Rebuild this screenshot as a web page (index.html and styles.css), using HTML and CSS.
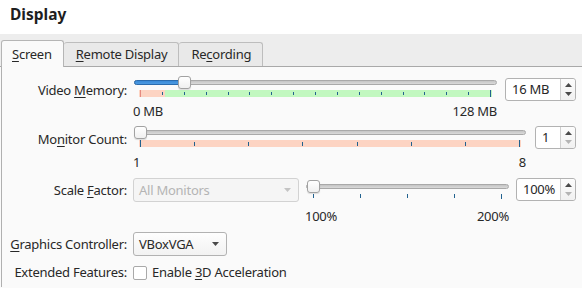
FILE: index.html
```html
<!DOCTYPE html>
<html lang="en">
<head>
    <meta charset="UTF-8">
    <title>Display</title>
    <link rel="stylesheet" href="styles.css">
</head>
<body>
    <div class="header"><h1>Display</h1></div>

    <div class="tabbar">
        <div class="tab active"><u>S</u>creen</div>
        <div class="tab"><u>R</u>emote Display</div>
        <div class="tab">Re<u>c</u>ording</div>
    </div>

    <div class="panel">
        <!-- video memory -->
        <div class="row row-mem">
            <label class="label">Video <u>M</u>emory:</label>
            <div class="slider">
                <div class="track">
                    <div class="fill" style="width: 50px"></div>
                    <div class="handle" style="left: 44px"></div>
                </div>
                <div class="ticks bar mem">
                    <i class="full red"></i><i></i><i></i><i></i><i></i><i></i><i></i><i></i><i></i>
                    <i></i><i></i><i></i><i></i><i></i><i></i><i></i><i class="full"></i>
                </div>
                <div class="ends"><span>0 MB</span><span>128 MB</span></div>
            </div>
            <div class="spin spin-mem">
                <div class="val">16 MB</div>
                <div class="btns">
                    <svg width="7" height="4" viewBox="0 0 7 4"><polygon points="0,4 3.5,0 7,4" fill="#4a4a4a"/></svg>
                    <svg width="7" height="4" viewBox="0 0 7 4"><polygon points="0,0 7,0 3.5,4" fill="#4a4a4a"/></svg>
                </div>
            </div>
        </div>

        <!-- monitor count -->
        <div class="row row-mon">
            <label class="label">Mo<u>n</u>itor Count:</label>
            <div class="slider">
                <div class="track">
                    <div class="handle" style="left: 0"></div>
                </div>
                <div class="ticks bar salmon">
                    <i class="full"></i><i></i><i></i><i></i><i></i><i></i><i></i><i class="full"></i>
                </div>
                <div class="ends"><span>1</span><span>8</span></div>
            </div>
            <div class="spin spin-mon">
                <div class="val">1</div>
                <div class="btns">
                    <svg width="7" height="4" viewBox="0 0 7 4"><polygon points="0,4 3.5,0 7,4" fill="#4a4a4a"/></svg>
                    <svg width="7" height="4" viewBox="0 0 7 4"><polygon points="0,0 7,0 3.5,4" fill="#b4b4b4"/></svg>
                </div>
            </div>
        </div>

        <!-- scale factor -->
        <div class="row row-scale">
            <label class="label">Scale <u>F</u>actor:</label>
            <div class="combo disabled combo-mon">
                <span>All Monitors</span>
                <svg width="7" height="4" viewBox="0 0 7 4"><polygon points="0,0 7,0 3.5,4" fill="#c4c4c4"/></svg>
            </div>
            <div class="slider slider-scale">
                <div class="track">
                    <div class="handle" style="left: 1px"></div>
                </div>
                <div class="ticks plain">
                    <i></i><i></i><i></i><i></i><i class="full"></i>
                </div>
                <div class="ends"><span>100%</span><span>200%</span></div>
            </div>
            <div class="spin spin-scale">
                <div class="val">100%</div>
                <div class="btns">
                    <svg width="7" height="4" viewBox="0 0 7 4"><polygon points="0,4 3.5,0 7,4" fill="#4a4a4a"/></svg>
                    <svg width="7" height="4" viewBox="0 0 7 4"><polygon points="0,0 7,0 3.5,4" fill="#b4b4b4"/></svg>
                </div>
            </div>
        </div>

        <!-- graphics controller -->
        <div class="row center row-gfx">
            <label class="label"><u>G</u>raphics Controller:</label>
            <div class="combo combo-gfx">
                <span>VBoxVGA</span>
                <svg width="7" height="4" viewBox="0 0 7 4"><polygon points="0,0 7,0 3.5,4" fill="#4a4a4a"/></svg>
            </div>
        </div>

        <!-- extended features -->
        <div class="row center row-ext">
            <label class="label">Extended Features:</label>
            <span class="check"></span>
            <span class="check-text">Enable <u>3</u>D Acceleration</span>
        </div>
    </div>
</body>
</html>
```

FILE: styles.css
```css
body {
    margin: 0;
    font-family: "Noto Sans", sans-serif;
    font-size: 13px;
    letter-spacing: -0.25px;
    color: #282828;
    background-color: #fafafa;
    width: 582px;
    height: 288px;
    overflow: hidden;
}

u {
    text-decoration-thickness: 1px;
    text-underline-offset: 2px;
}

.header {
    height: 34px;
    background-color: #fff;
}

h1 {
    margin: 0;
    padding: 3px 0 0 10px;
    font-size: 15.5px;
    font-weight: bold;
    letter-spacing: 0;
    line-height: 22px;
    color: #1e1e1e;
}

.tabbar {
    display: flex;
    align-items: flex-end;
    height: 32px;
    padding-left: 1px;
    background-color: #ededed;
    border-bottom: 1px solid #a9a9a9;
}

.tab {
    height: 23px;
    line-height: 23px;
    padding: 0 11px 0 12px;
    background-color: #e9e9e9;
    border: 1px solid #bdbdbd;
    border-bottom: none;
    border-left: none;
    border-radius: 3px 3px 0 0;
}

.tab.active {
    height: 26px;
    line-height: 26px;
    margin-bottom: -1px;
    padding: 0 11px 0 10px;
    background-color: #fafafa;
    border-left: 1px solid #bdbdbd;
    border-color: #b5b5b5;
}

.panel {
    margin-left: 1px;
    border-left: 1px solid #b0b0b0;
    padding-right: 6px;
    height: 220px;
}

.row {
    display: flex;
    align-items: flex-start;
}

.row.center {
    align-items: center;
}

.label {
    width: 125px;
    margin-right: 6px;
    text-align: right;
    line-height: 17px;
    white-space: nowrap;
}

/* sliders */
.slider {
    flex: 1;
    margin-left: 1px;
}

.track {
    position: relative;
    height: 13px;
}

.track::before {
    content: "";
    position: absolute;
    left: 0;
    right: 0;
    top: 4px;
    height: 5px;
    box-sizing: border-box;
    border: 1px solid #a9a9a9;
    border-radius: 3px;
    background: linear-gradient(#c4c4c4, #dadada);
}

.fill {
    position: absolute;
    left: 0;
    top: 4px;
    height: 5px;
    box-sizing: border-box;
    border: 1px solid #2b6cae;
    border-radius: 3px;
    background: linear-gradient(#3a8ad8, #4c9be2);
}

.handle {
    position: absolute;
    top: 0;
    width: 13px;
    height: 13px;
    box-sizing: border-box;
    border: 1px solid #a2a2a2;
    border-radius: 3px;
    background: linear-gradient(#ffffff, #f0f0f0);
    box-shadow: 0 1px 1px rgba(0, 0, 0, 0.12);
}

.ticks {
    display: flex;
    justify-content: space-between;
    align-items: center;
    margin: 1px 5px 0 5px;
    padding: 0 1px;
    height: 7px;
}

.ticks i {
    width: 1px;
    height: 3px;
    background-color: #22628f;
}

.ticks i.full {
    height: 7px;
}

.ticks.mem {
    background: linear-gradient(to right, #fdd4c3 26px, #c2f8c0 26px);
}

.ticks.mem i.red {
    background-color: #e58a80;
}

.ticks.salmon {
    background-color: #fdd4c3;
}

.ticks.salmon i {
    height: 4px;
    align-self: flex-end;
    margin-bottom: 1px;
}

.ticks.salmon i.full {
    height: 7px;
    margin-bottom: 0;
}

.ticks.plain {
    margin: 1px 6px 0 6px;
    height: 5px;
    align-items: flex-start;
}

.ticks.plain i {
    height: 4px;
}

.ticks.plain i.full {
    height: 5px;
}

.ends {
    display: flex;
    justify-content: space-between;
    line-height: 17px;
    margin-left: -1px;
}

/* spin boxes */
.spin {
    display: flex;
    height: 23px;
    box-sizing: border-box;
    border: 1px solid #b2b2b2;
    border-radius: 3px;
    background-color: #fff;
}

.spin .val {
    flex: 1;
    padding-left: 6px;
    line-height: 21px;
    color: #262626;
}

.spin .btns {
    width: 14px;
    border-left: 1px solid #cfcfcf;
    display: flex;
    flex-direction: column;
    align-items: center;
    justify-content: center;
    gap: 5px;
    background: linear-gradient(#fcfcfc, #f1f1f1);
    border-radius: 0 3px 3px 0;
}

/* combos */
.combo {
    display: flex;
    align-items: center;
    justify-content: space-between;
    height: 24px;
    box-sizing: border-box;
    padding: 0 7px 0 5px;
    border: 1px solid #b2b2b2;
    border-radius: 3px;
    background: linear-gradient(#fefefe, #f2f2f2);
}

.combo.disabled {
    border-color: #d2d2d2;
    background: #f5f5f5;
    color: #b4b4b4;
}

/* row placements */
.row-mem {
    padding-top: 9px;
}

.row-mem .label {
    margin-top: 6px;
}

.row-mem .ends {
    margin-top: 6px;
}

.spin-mem {
    width: 71px;
    margin-left: 8px;
    margin-top: 2px;
}

.row-mon {
    margin-top: 6px;
}

.row-mon .label {
    margin-top: 5px;
}

.row-mon .ends {
    margin-top: 7px;
}

.spin-mon {
    width: 41px;
    margin-left: 9px;
    margin-top: 0;
}

.row-scale {
    margin-top: 7px;
}

.row-scale .label {
    margin-top: 4px;
}

.combo-mon {
    width: 166px;
}

.slider-scale {
    margin-left: 7px;
    margin-top: 2px;
}

.slider-scale .ends {
    margin-top: 9px;
}

.spin-scale {
    width: 60px;
    margin-left: 7px;
}

.row-gfx {
    margin-top: 7px;
}

.combo-gfx {
    width: 94px;
}

.row-ext {
    margin-top: 8px;
    line-height: 17px;
}

.row-ext .label {
    margin-right: 6px;
}

.check {
    width: 14px;
    height: 14px;
    box-sizing: border-box;
    border: 1px solid #a9a9a9;
    border-radius: 2px;
    background-color: #fff;
}

.check-text {
    margin-left: 5px;
}
```
